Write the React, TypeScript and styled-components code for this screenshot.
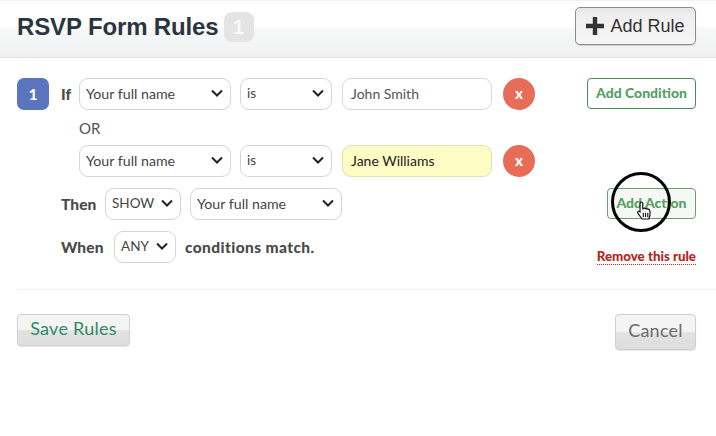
import React from "react";
import styled, { createGlobalStyle } from "styled-components";

const GlobalStyle = createGlobalStyle`
	html, body {
		margin: 0;
		padding: 0;
		background: #fff;
		font-family: "Lato", "Liberation Sans", sans-serif;
	}
`;

const Page = styled.div`
	position: relative;
	width: 716px;
	height: 436px;
	overflow: hidden;
	box-sizing: border-box;
	border-top: 1px solid #f2f2f2;
`;

const Header = styled.header`
	display: flex;
	align-items: flex-start;
	justify-content: space-between;
	box-sizing: border-box;
	height: 57px;
	padding: 6px 20px 0 17px;
	background: linear-gradient(#fff 0, #fff 26px, #f8f8f8 27px, #eff1f2 56px);
	border-bottom: 1px solid #e2e3e4;
`;

const TitleGroup = styled.div`
	display: flex;
	align-items: center;
	gap: 5px;
	padding-top: 5px;
`;

const Title = styled.h1`
	margin: 0;
	font-family: "Liberation Sans", Arial, sans-serif;
	font-size: 24px;
	font-weight: 700;
	letter-spacing: -0.14px;
	line-height: 30px;
	color: #2a3540;
`;

const CountBadge = styled.span`
	display: flex;
	align-items: center;
	justify-content: center;
	width: 30px;
	height: 30px;
	border-radius: 8px;
	background: #e4e4e4;
	color: #fafafa;
	font-family: "Liberation Sans", Arial, sans-serif;
	font-size: 20px;
	font-weight: 700;
`;

const AddRuleButton = styled.button`
	display: flex;
	align-items: center;
	justify-content: center;
	gap: 6px;
	box-sizing: border-box;
	width: 121px;
	height: 38px;
	padding: 0;
	border: 1px solid #8b8b8b;
	border-radius: 5px;
	background: linear-gradient(#e6e6e6 0, #efefef 8px, #f6f6f6 100%);
	box-shadow: 0 1px 1px rgba(0, 0, 0, 0.15);
	color: #333;
	font-family: "Liberation Sans", Arial, sans-serif;
	font-size: 18px;
`;

const Body = styled.main`
	padding: 20px 20px 0 17px;
`;

const Rule = styled.section`
	display: grid;
	grid-template-columns: 44px 1fr;
	padding-bottom: 26px;
	border-bottom: 1px solid #f0f0f0;
	margin-right: -20px;
	padding-right: 20px;
`;

const RuleNumber = styled.div`
	display: flex;
	align-items: center;
	justify-content: center;
	width: 32px;
	height: 32px;
	border-radius: 7px;
	background: #5a74bd;
	color: #fff;
	font-size: 15px;
	font-weight: 900;
`;

const RuleBody = styled.div`
	display: flex;
	flex-direction: column;
`;

const Row = styled.div<{ $mt?: number }>`
	display: flex;
	align-items: center;
	gap: 9px;
	height: 32px;
	margin-top: ${(p) => p.$mt ?? 0}px;
`;

const Keyword = styled.span<{ $w?: number; $wide?: boolean }>`
	width: ${(p) => (p.$w ? `${p.$w}px` : "auto")};
	padding-bottom: 1px;
	color: #4a4a4a;
	font-size: 15.5px;
	font-weight: 900;
	letter-spacing: ${(p) => (p.$wide ? "0.4px" : "0.1px")};
	white-space: nowrap;
`;

const OrLabel = styled.div`
	height: 35px;
	padding-left: 18px;
	line-height: 36px;
	color: #555;
	font-size: 15px;
`;

const Select = styled.div<{ $w: number; $wide?: boolean }>`
	display: flex;
	align-items: center;
	justify-content: space-between;
	box-sizing: border-box;
	width: ${(p) => p.$w}px;
	height: 32px;
	padding: 0 7px 2px 6px;
	border: 1px solid #d4d4d4;
	border-radius: 9px;
	background: #fff;
	color: #444;
	font-size: ${(p) => (p.$wide ? "14.2px" : "13.5px")};
	white-space: nowrap;
`;

const TextInput = styled.div<{ $highlight?: boolean }>`
	display: flex;
	align-items: center;
	box-sizing: border-box;
	width: 150px;
	height: 32px;
	margin-left: 1px;
	padding: 0 8px 2px;
	border: 1px solid ${(p) => (p.$highlight ? "#e0e0b8" : "#d8d8d8")};
	border-radius: 9px;
	background: ${(p) => (p.$highlight ? "#fdfcc4" : "#fff")};
	color: ${(p) => (p.$highlight ? "#222" : "#555")};
	font-size: 14px;
`;

const RemoveButton = styled.button`
	display: flex;
	align-items: center;
	justify-content: center;
	width: 32px;
	height: 32px;
	margin-left: 2px;
	padding: 0 0 2px;
	border: 0;
	border-radius: 50%;
	background: #e76d58;
	color: #fff;
	font-family: "Lato", sans-serif;
	font-size: 15px;
	font-weight: 900;
`;

const OutlineButton = styled.button<{ $w: number; $hover?: boolean }>`
	align-self: flex-start;
	box-sizing: border-box;
	width: ${(p) => p.$w}px;
	height: 31px;
	margin-left: auto;
	padding: 0 0 2px;
	border: 1px solid ${(p) => (p.$hover ? "#6f9a74" : "#4c8a54")};
	border-radius: 4px;
	background: ${(p) => (p.$hover ? "#f6f8f6" : "#fff")};
	color: #55a062;
	font-family: "Lato", sans-serif;
	font-size: 14px;
	font-weight: 900;
`;

const RemoveLink = styled.a`
	margin-left: auto;
	align-self: flex-end;
	padding-bottom: 1px;
	border-bottom: 1px dotted #a33;
	color: #b5241a;
	font-size: 13.3px;
	font-weight: 900;
	line-height: 14px;
	transform: translateY(2px);
`;

const Footer = styled.footer`
	display: flex;
	align-items: flex-start;
	justify-content: space-between;
	padding-top: 24px;
`;

const GreyButton = styled.button<{ $w: number; $h: number; $green?: boolean }>`
	box-sizing: border-box;
	width: ${(p) => p.$w}px;
	height: ${(p) => p.$h}px;
	padding: 0 0 4px;
	border: 1px solid #cfcfcf;
	border-radius: 4px;
	background: linear-gradient(#f4f4f4 0, #f4f4f4 50%, #e2e2e2 52%, #dedede 100%);
	box-shadow: 0 1px 1px rgba(0, 0, 0, 0.1);
	color: ${(p) => (p.$green ? "#2f8a68" : "#666b70")};
	font-family: "Lato", sans-serif;
	font-size: 18px;
	letter-spacing: 0.25px;
`;

const CursorRing = styled.div`
	position: absolute;
	left: 611px;
	top: 171px;
	box-sizing: border-box;
	width: 60px;
	height: 60px;
	border: 3.5px solid #050505;
	border-radius: 50%;
`;

const HandCursor = styled.svg`
	position: absolute;
	left: 636px;
	top: 200px;
`;

function Chevron() {
	return (
		<svg width="12" height="8" viewBox="0 0 12 8" aria-hidden="true">
			<path d="M1 1.5 6 6.5l5-5" fill="none" stroke="#222" strokeWidth="2" />
		</svg>
	);
}

function Plus() {
	return (
		<svg width="18" height="18" viewBox="0 0 18 18" aria-hidden="true">
			<path d="M6.8 0h4.4v6.8H18v4.4h-6.8V18H6.8v-6.8H0V6.8h6.8z" fill="#333" />
		</svg>
	);
}

export default function App() {
	return (
		<Page>
			<GlobalStyle />
			<Header>
				<TitleGroup>
					<Title>RSVP Form Rules</Title>
					<CountBadge>1</CountBadge>
				</TitleGroup>
				<AddRuleButton>
					<Plus />
					Add Rule
				</AddRuleButton>
			</Header>
			<Body>
				<Rule>
					<RuleNumber>1</RuleNumber>
					<RuleBody>
						<Row>
							<Keyword $w={9}>If</Keyword>
							<Select $w={152} $wide>
								Your full name
								<Chevron />
							</Select>
							<Select $w={92}>
								is
								<Chevron />
							</Select>
							<TextInput>John Smith</TextInput>
							<RemoveButton>x</RemoveButton>
							<OutlineButton $w={109}>Add Condition</OutlineButton>
						</Row>
						<OrLabel>OR</OrLabel>
						<Row>
							<Keyword $w={9} />
							<Select $w={152} $wide>
								Your full name
								<Chevron />
							</Select>
							<Select $w={92}>
								is
								<Chevron />
							</Select>
							<TextInput $highlight>Jane Williams</TextInput>
							<RemoveButton>x</RemoveButton>
						</Row>
						<Row $mt={11}>
							<Keyword $w={35}>Then</Keyword>
							<Select $w={76}>
								SHOW
								<Chevron />
							</Select>
							<Select $w={152} $wide>
								Your full name
								<Chevron />
							</Select>
							<OutlineButton $w={89} $hover>
								Add Action
							</OutlineButton>
						</Row>
						<Row $mt={11}>
							<Keyword $w={44}>When</Keyword>
							<Select $w={62}>
								ANY
								<Chevron />
							</Select>
							<Keyword $wide>conditions match.</Keyword>
							<RemoveLink>Remove this rule</RemoveLink>
						</Row>
					</RuleBody>
				</Rule>
				<Footer>
					<GreyButton $w={113} $h={32} $green>
						Save Rules
					</GreyButton>
					<GreyButton $w={81} $h={36}>
						Cancel
					</GreyButton>
				</Footer>
			</Body>
			<CursorRing />
			<HandCursor width="18" height="20" viewBox="0 0 16 18" aria-hidden="true">
				<path
					d="M4 1.5c.8-.8 2-.4 2 .8V7l.6-.3c.7-.3 1.4-.2 1.8.3.6-.4 1.5-.3 1.9.4.7-.3 1.5 0 1.8.7.5 1 .6 2.6.4 4.2-.2 1.4-.6 2.6-1 3.9H5.4L2 11.5c-.6-.8-.9-1.5-.4-2 .5-.5 1.3-.3 1.9.3V2.500z"
					fill="#fff"
					stroke="#111"
					strokeWidth="1.1"
				/>
				<path d="M6.5 10.500v4M8.500 10.500v4M10.500 10.500v4" stroke="#111" strokeWidth="1" />
			</HandCursor>
		</Page>
	);
}
